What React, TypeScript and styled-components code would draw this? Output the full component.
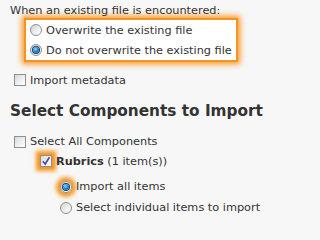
import {FC} from "react";
import styled, {createGlobalStyle} from "styled-components";

const GlobalStyle = createGlobalStyle`
  html, body {
    margin: 0;
    padding: 0;
    background: #f7f7f7;
  }
  body {
    font-family: "DejaVu Sans", Verdana, sans-serif;
    font-size: 11.3px;
    color: #333;
  }
`;

const ORANGE = "#f7941d";

/**
 * radio and checkbox look like the old IE/Windows controls
 */
const Radio: FC<{checked?: boolean; glow?: boolean}> = ({checked, glow}) => (
  <RadioCircle $glow={glow}>{checked && <RadioDot />}</RadioCircle>
);

const Check: FC<{checked?: boolean; glow?: boolean}> = ({checked, glow}) => (
  <CheckBox $glow={glow}>
    {checked && (
      <svg width="10" height="10" viewBox="0 0 10 10">
        <path d="M1.8 5.2 L4.2 8 L8.4 1.2" fill="none" stroke="#4b4fb0" strokeWidth="1.7" />
      </svg>
    )}
  </CheckBox>
);

export default function App() {
  return (
    <>
      <GlobalStyle />
      <Page>
        <Caption>When an existing file is encountered:</Caption>
        <Highlight>
          <Row $h={20}>
            <Radio />
            <span>Overwrite the existing file</span>
          </Row>
          <Row $h={20}>
            <Radio checked />
            <span>Do not overwrite the existing file</span>
          </Row>
        </Highlight>
        <Row $h={20} $indent={4} $top={8}>
          <Check />
          <span>Import metadata</span>
        </Row>
        <Heading>Select Components to Import</Heading>
        <Row $h={19} $indent={4} $top={11}>
          <Check />
          <span>Select All Components</span>
        </Row>
        <Row $h={20} $indent={30}>
          <Check checked glow />
          <span>
            <b>Rubrics</b> (1 item(s))
          </span>
        </Row>
        <Row $h={21} $indent={50} $top={5}>
          <Radio checked glow />
          <span>Import all items</span>
        </Row>
        <Row $h={21} $indent={50}>
          <Radio />
          <span>Select individual items to import</span>
        </Row>
      </Page>
    </>
  );
}

//css-style
const Page = styled.div`
  padding: 4px 0 0 10px;
`;

const Caption = styled.div`
  line-height: 14px;
  height: 14px;
  white-space: nowrap;
`;

const Highlight = styled.div`
  width: 206px;
  margin: 0 0 0 14px;
  padding: 0 0 0 4px;
  background: #fff;
  border: 2px solid ${ORANGE};
  box-shadow: 0 0 6px 2px ${ORANGE};
`;

const Row = styled.div<{$h: number; $indent?: number; $top?: number}>`
  display: flex;
  align-items: center;
  gap: 4px;
  height: ${(p) => p.$h}px;
  margin-left: ${(p) => p.$indent ?? 0}px;
  margin-top: ${(p) => p.$top ?? 0}px;
  white-space: nowrap;
  b {
    font-weight: bold;
  }
`;

const Heading = styled.div`
  margin-top: 11px;
  height: 20px;
  line-height: 20px;
  font-size: 15.3px;
  font-weight: bold;
  color: #333;
  white-space: nowrap;
`;

const RadioCircle = styled.span<{$glow?: boolean}>`
  flex: none;
  box-sizing: border-box;
  width: 12px;
  height: 12px;
  border-radius: 50%;
  border: 1px solid #8e8e8e;
  background: linear-gradient(135deg, #d2d2d2 0%, #eeeeee 55%, #ffffff 100%);
  display: flex;
  align-items: center;
  justify-content: center;
  box-shadow: ${(p) => (p.$glow ? `0 0 4px 4px ${ORANGE}` : "none")};
`;

const RadioDot = styled.span`
  width: 6px;
  height: 6px;
  border-radius: 50%;
  background: radial-gradient(circle at 40% 35%, #8fd3ff 0%, #1f86c9 50%, #0a3f73 100%);
  box-shadow: 0 0 0 1px #1d3f66;
`;

const CheckBox = styled.span<{$glow?: boolean}>`
  flex: none;
  box-sizing: border-box;
  width: 12px;
  height: 12px;
  border: 1px solid #8f8f8f;
  background: linear-gradient(135deg, #d8d8d8 0%, #f2f2f2 60%, #ffffff 100%);
  display: flex;
  align-items: center;
  justify-content: center;
  box-shadow: ${(p) => (p.$glow ? `0 0 4px 4px ${ORANGE}` : "none")};
`;
